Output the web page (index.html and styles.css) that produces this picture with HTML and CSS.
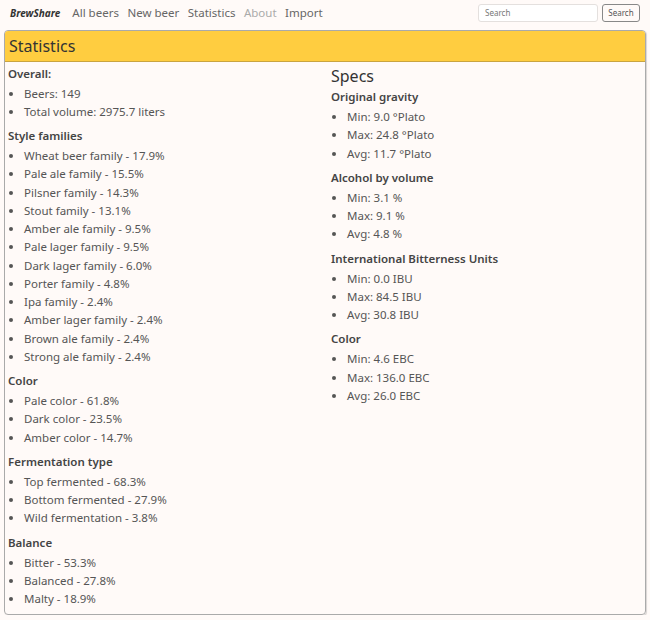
FILE: index.html
```html
<!DOCTYPE html>
<html>
<head>
<meta charset="utf-8">
<link rel="stylesheet" href="styles.css">
</head>
<body>
<nav class="navbar">
  <a class="brand">BrewShare</a>
  <a class="nav-link">All beers</a>
  <a class="nav-link">New beer</a>
  <a class="nav-link">Statistics</a>
  <a class="nav-link disabled">About</a>
  <a class="nav-link">Import</a>
  <form class="search">
    <input class="search-input" type="text" placeholder="Search">
    <button class="search-btn" type="button">Search</button>
  </form>
</nav>
<div class="card">
  <div class="card-header">Statistics</div>
  <div class="card-body">
    <div class="col">
      <div class="sub">Overall:</div>
      <ul>
        <li>Beers: 149</li>
        <li>Total volume: 2975.7 liters</li>
      </ul>
      <div class="sub">Style families</div>
      <ul>
        <li>Wheat beer family - 17.9%</li>
        <li>Pale ale family - 15.5%</li>
        <li>Pilsner family - 14.3%</li>
        <li>Stout family - 13.1%</li>
        <li>Amber ale family - 9.5%</li>
        <li>Pale lager family - 9.5%</li>
        <li>Dark lager family - 6.0%</li>
        <li>Porter family - 4.8%</li>
        <li>Ipa family - 2.4%</li>
        <li>Amber lager family - 2.4%</li>
        <li>Brown ale family - 2.4%</li>
        <li>Strong ale family - 2.4%</li>
      </ul>
      <div class="sub">Color</div>
      <ul>
        <li>Pale color - 61.8%</li>
        <li>Dark color - 23.5%</li>
        <li>Amber color - 14.7%</li>
      </ul>
      <div class="sub">Fermentation type</div>
      <ul>
        <li>Top fermented - 68.3%</li>
        <li>Bottom fermented - 27.9%</li>
        <li>Wild fermentation - 3.8%</li>
      </ul>
      <div class="sub">Balance</div>
      <ul>
        <li>Bitter - 53.3%</li>
        <li>Balanced - 27.8%</li>
        <li>Malty - 18.9%</li>
      </ul>
    </div>
    <div class="col">
      <div class="specs">Specs</div>
      <div class="sub">Original gravity</div>
      <ul>
        <li>Min: 9.0 °Plato</li>
        <li>Max: 24.8 °Plato</li>
        <li>Avg: 11.7 °Plato</li>
      </ul>
      <div class="sub">Alcohol by volume</div>
      <ul>
        <li>Min: 3.1 %</li>
        <li>Max: 9.1 %</li>
        <li>Avg: 4.8 %</li>
      </ul>
      <div class="sub">International Bitterness Units</div>
      <ul>
        <li>Min: 0.0 IBU</li>
        <li>Max: 84.5 IBU</li>
        <li>Avg: 30.8 IBU</li>
      </ul>
      <div class="sub">Color</div>
      <ul>
        <li>Min: 4.6 EBC</li>
        <li>Max: 136.0 EBC</li>
        <li>Avg: 26.0 EBC</li>
      </ul>
    </div>
  </div>
</div>
</body>
</html>
```
FILE: styles.css
```css
html, body {
  margin: 0;
  background: #fffaf8;
  font-family: "Noto Sans", "Open Sans", sans-serif;
  color: #555;
}
.navbar {
  display: flex;
  align-items: center;
  height: 25px;
  padding: 0 10px;
  margin-bottom: 5px;
}
.brand {
  font-weight: bold;
  font-style: italic;
  font-size: 10px;
  color: #333;
  margin-right: 12px;
}
.nav-link {
  font-size: 11.5px;
  color: #666;
  margin-right: 8.5px;
}
.nav-link.disabled {
  color: #aaa;
}
.search {
  margin-left: auto;
  display: flex;
  align-items: center;
  gap: 4px;
}
.search-input {
  width: 120px;
  height: 18px;
  box-sizing: border-box;
  border: 1px solid #e4e0de;
  border-radius: 3px;
  background: #fff;
  font-family: inherit;
  font-size: 8px;
  padding: 0 6px;
  color: #555;
}
.search-input::placeholder { color: #777; }
.search-btn {
  height: 18px;
  width: 38px;
  box-sizing: border-box;
  border: 1px solid #888;
  border-radius: 3px;
  background: #fffaf8;
  font-family: inherit;
  font-size: 8px;
  color: #555;
  padding: 0;
}
.card {
  margin: 0 4px 0 4px;
  border: 1px solid #aaa;
  border-radius: 4px;
  overflow: hidden;
  box-shadow: 1px 1px 1px rgba(0,0,0,0.15);
}
.card-header {
  background: #ffcd40;
  border-bottom: 1px solid #c9a440;
  height: 30px;
  line-height: 30px;
  padding: 0 4px;
  font-size: 16px;
  color: #333;
}
.card-body {
  display: grid;
  grid-template-columns: 1fr 1fr;
  padding: 2.5px 3px 0 3px;
}
.col + .col {
  padding-left: 6px;
}
.sub {
  font-weight: 600;
  font-size: 11.5px;
  line-height: 18px;
  margin-bottom: 2px;
  color: #444;
}
.specs {
  font-size: 16px;
  line-height: 22px;
  margin-bottom: 1.5px;
  color: #333;
}
ul {
  margin: 0 0 6px 0;
  padding-left: 16px;
}
li {
  font-size: 11.5px;
  line-height: 18.25px;
}
```
